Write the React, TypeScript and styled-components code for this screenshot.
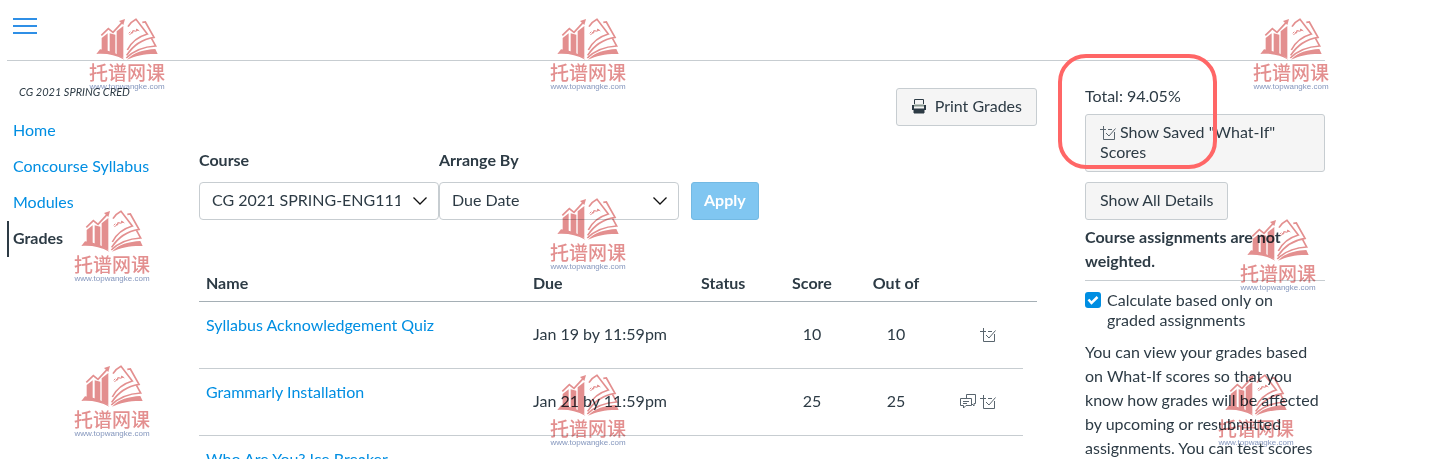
import React from "react";
import styled, { createGlobalStyle, css } from "styled-components";

const ink = "#2d3b45";
const link = "#008ee2";
const line = "#c7cdd1";

const Global = createGlobalStyle`
  *, *::before, *::after { box-sizing: border-box; }
  body { margin: 0; background: #fff; color: ${ink}; font: 16px/24px Lato, "Noto Sans CJK SC", sans-serif; }
  button, select, input { font: inherit; color: inherit; }
  a { color: ${link}; text-decoration: none; }
`;

const Page = styled.div`
  position: relative;
  height: 100vh;
  overflow: hidden;
  padding: 0 109px 0 7px;
`;
const Header = styled.header`
  display: flex;
  padding: 12px 4px 20px;
  border-bottom: 1px solid ${line};
`;
const MenuButton = styled.button`
  display: flex;
  align-items: center;
  height: 28px;
  padding: 0 2px;
  border: 0;
  background: none;
  color: #2f8fe6;
`;
const Columns = styled.div`
  display: flex;
  align-items: flex-start;
`;
const Sidebar = styled.nav`
  flex: 0 0 192px;
  padding-top: 19px;
`;
const Term = styled.p`
  margin: 0 0 9px;
  padding-left: 12px;
  font-size: 11px;
  font-style: italic;
`;
const NavList = styled.ul`
  display: flex;
  flex-direction: column;
  margin: 0;
  padding: 0;
  list-style: none;
`;
const NavLink = styled.a<{ $active?: boolean }>`
  display: block;
  padding: 5px 6px 7px;
  ${(p) => p.$active
    ? css`padding-left: 4px; border-left: 2px solid ${ink}; color: ${ink}; font-weight: bold;`
    : ""}
`;
const Main = styled.main`
  flex: 1;
  min-width: 0;
  padding-top: 27px;
`;
const Button = styled.button`
  padding: 7px 14px 9px;
  border: 1px solid ${line};
  border-radius: 3px;
  background: #f5f5f5;
  line-height: 20px;
  text-align: left;
`;
const PrintButton = styled(Button)`
  display: flex;
  align-items: center;
  gap: 8px;
  margin-left: auto;
`;
const Filters = styled.form`
  display: flex;
  align-items: flex-end;
  margin-top: 22px;
`;
const Field = styled.label`
  display: flex;
  flex-direction: column;
  gap: 10px;
  width: 240px;
  font-weight: bold;
`;
const SelectBox = styled.span`
  display: grid;
  align-items: center;
  font-weight: normal;
  & > * { grid-area: 1 / 1; }
  svg { justify-self: end; margin-right: 11px; pointer-events: none; }
`;
const Select = styled.select`
  width: 100%;
  height: 38px;
  padding: 0 38px 2px 12px;
  border: 1px solid ${line};
  border-radius: 4px;
  background: #fff;
  appearance: none;
`;
const Apply = styled(Button)`
  margin-left: 12px;
  padding: 7px 12px 9px;
  border-color: #73b9e3;
  background: #80c6f1;
  color: #fff;
  font-weight: bold;
`;
const Grades = styled.table`
  width: 100%;
  margin-top: 46px;
  border-collapse: separate;
  border-spacing: 0;
  table-layout: fixed;
  th { height: 36px; padding: 0 7px 2px; border-bottom: 1px solid #a5afb5; text-align: left; }
  td { height: 67px; padding: 0 7px 4px; vertical-align: middle; }
`;
const Row = styled.tr`
  background: linear-gradient(${line}, ${line}) left bottom / calc(100% - 14px) 1px no-repeat;
`;
const NameCell = styled.td`
  && { padding-top: 11px; vertical-align: top; }
`;
const NumHead = styled.th`
  && { padding-left: 0; padding-right: 0; text-align: center; }
`;
const Num = styled.td`
  && { padding-left: 0; padding-right: 0; text-align: center; }
`;
const Icons = styled.span`
  display: flex;
  justify-content: flex-end;
  gap: 3px;
  padding: 2px 34px 0 0;
`;
const Aside = styled.aside`
  flex: 0 0 240px;
  margin-left: 48px;
  padding-top: 23px;
`;
const Total = styled.div`
  margin-bottom: 6px;
`;
const WhatIf = styled(Button)`
  display: block;
  width: 100%;
  margin-bottom: 10px;
  svg { vertical-align: -3px; margin-right: 4px; }
`;
const Weighting = styled.p`
  margin: 5px 0 7px;
  padding-bottom: 7px;
  border-bottom: 1px solid ${line};
  font-weight: bold;
`;
const CheckLabel = styled.label`
  display: flex;
  align-items: flex-start;
  gap: 6px;
  margin-top: 9px;
  line-height: 20px;
`;
const CheckWrap = styled.span`
  display: grid;
  flex: none;
  margin-top: 2px;
  & > * { grid-area: 1 / 1; }
  svg { pointer-events: none; }
`;
const CheckInput = styled.input`
  width: 16px;
  height: 16px;
  margin: 0;
  border-radius: 3px;
  background: #008ee2;
  appearance: none;
`;
const Help = styled.p`
  margin: 10px 0 0;
`;
const Highlight = styled.div`
  position: absolute;
  top: 54px;
  left: 1058px;
  width: 159px;
  height: 115px;
  border: 4px solid #ff6666;
  border-radius: 28px;
  pointer-events: none;
`;
const Mark = styled.div<{ $x: number; $y: number }>`
  position: absolute;
  left: ${(p) => p.$x}px;
  top: ${(p) => p.$y}px;
  display: flex;
  flex-direction: column;
  align-items: center;
  width: 80px;
  color: #e38f8f;
  mix-blend-mode: multiply;
  pointer-events: none;
`;
const MarkName = styled.span`
  font: 500 19px/20px "Noto Sans CJK SC", sans-serif;
`;
const MarkUrl = styled.span`
  color: #8496bd;
  font: 8px/10px "Liberation Sans", sans-serif;
`;

const AssignIcon = () => (
  <svg width="16" height="16" viewBox="0 0 16 16" fill="none" stroke="#59656e" aria-hidden="true">
    <path d="M0 4.500h6M3.500 1v13.500h11V7M8 4.500h4M6 8l3 3 6.500-7.500" />
  </svg>
);
const CommentIcon = () => (
  <svg width="17" height="16" viewBox="0 0 17 16" fill="none" stroke="#59656e" aria-hidden="true">
    <path d="M6.500 4V.500h9v9H14V12l-2.500-2.500M.500 4.500h11v7H6L3.500 14v-2.500h-3zM3 7.500h6M3 9.500h4" />
  </svg>
);
const PrintIcon = () => (
  <svg width="16" height="16" viewBox="0 0 16 16" fill="none" stroke="currentColor" aria-hidden="true">
    <path d="M3.500 6V1.500h9V6" />
    <path d="M3 7.500h10" stroke="#87968f" strokeWidth="2" />
    <path d="M2 12V7M14 12V7" strokeWidth="2" />
    <path d="M3 11h10v4H3z" fill="currentColor" />
  </svg>
);
const Chevron = () => (
  <svg width="16" height="10" viewBox="0 0 16 10" fill="none" stroke="#111" strokeWidth="1.300" aria-hidden="true">
    <path d="M1.500 1.500 8 8l6.500-6.500" />
  </svg>
);
const Book = () => (
  <svg width="64" height="44" viewBox="0 0 192 132" fill="currentColor" aria-hidden="true">
    <path d="M20 60l18-14v55l-18-3zM44 46l17 4v58l-17-6zM65 40l20-16v97l-20-11z" />
    <path d="M4 108l11-14c28 4 56 12 73 31-26-14-52-19-84-17zM188 108l-7-15c-34 2-66 10-85 32 26-12 54-18 92-17z" />
    <g fill="none" stroke="currentColor" strokeWidth="5">
      <path d="M19 52l21-20 14 11 27-29M99 26c6-10 14-17 24-22l34 44c-34 10-50 28-60 48M142 13l9-1 26 46c-38 6-64 26-82 54M170 62l12 22c-36 2-66 14-88 36" />
      <path d="M101 46l5-5M103 50l7-4-1-4M112 46l1-8 6 0-4 5M122 42l3-9 8 6M123 38l7-1" strokeWidth="3" />
    </g>
    <path d="M90 3l-5 18-13-12z" />
  </svg>
);

const marks = [
  [87, 18], [548, 18], [1251, 18], [72, 210], [548, 198], [1238, 219], [72, 365], [548, 374], [1216, 374],
];
const rows = [
  { name: "Syllabus Acknowledgement Quiz", due: "Jan 19 by 11:59pm", score: "10", outOf: "10", comments: false },
  { name: "Grammarly Installation", due: "Jan 21 by 11:59pm", score: "25", outOf: "25", comments: true },
  { name: "Who Are You? Ice Breaker", due: "", score: "", outOf: "", comments: false },
];

export default function App() {
  return (
    <Page>
      <Global />
      <Header>
        <MenuButton aria-label="Course navigation">
          <svg width="24" height="18" viewBox="0 0 24 18" fill="none" stroke="currentColor" strokeWidth="2" aria-hidden="true">
            <path d="M0 2h24M0 9h24M0 16h24" />
          </svg>
        </MenuButton>
      </Header>
      <Columns>
        <Sidebar>
          <Term>CG 2021 SPRING CRED</Term>
          <NavList>
            {["Home", "Concourse Syllabus", "Modules", "Grades"].map((t) => (
              <li key={t}><NavLink href="#" $active={t === "Grades"}>{t}</NavLink></li>
            ))}
          </NavList>
        </Sidebar>
        <Main>
          <PrintButton><PrintIcon />Print Grades</PrintButton>
          <Filters>
            <Field>
              Course
              <SelectBox><Select><option>CG 2021 SPRING-ENG111</option></Select><Chevron /></SelectBox>
            </Field>
            <Field>
              Arrange By
              <SelectBox><Select><option>Due Date</option></Select><Chevron /></SelectBox>
            </Field>
            <Apply type="button">Apply</Apply>
          </Filters>
          <Grades>
            <colgroup>
              <col /><col width="168" /><col width="76" /><col width="84" /><col width="84" /><col width="99" />
            </colgroup>
            <thead>
              <tr>
                <th>Name</th><th>Due</th><th>Status</th><NumHead>Score</NumHead><NumHead>Out of</NumHead><th aria-label="Details" />
              </tr>
            </thead>
            <tbody>
              {rows.map((r) => (
                <Row key={r.name}>
                  <NameCell><a href="#">{r.name}</a></NameCell>
                  <td>{r.due}</td>
                  <td />
                  <Num>{r.score}</Num>
                  <Num>{r.outOf}</Num>
                  <td><Icons>{r.comments && <CommentIcon />}{r.score && <AssignIcon />}</Icons></td>
                </Row>
              ))}
            </tbody>
          </Grades>
        </Main>
        <Aside>
          <Total>Total: 94.05%</Total>
          <WhatIf><AssignIcon />Show Saved "What-If" Scores</WhatIf>
          <Button>Show All Details</Button>
          <Weighting>Course assignments are not weighted.</Weighting>
          <CheckLabel>
            <CheckWrap>
              <CheckInput type="checkbox" defaultChecked />
              <svg width="16" height="16" viewBox="0 0 16 16" fill="none" stroke="#fff" strokeWidth="2.500" aria-hidden="true">
                <path d="M3.500 7.500l3 3.500 6-6" />
              </svg>
            </CheckWrap>
            Calculate based only on graded assignments
          </CheckLabel>
          <Help>
            You can view your grades based on What-If scores so that you know how grades will be affected by
            upcoming or resubmitted assignments. You can test scores
          </Help>
        </Aside>
      </Columns>
      <Highlight />
      {marks.map(([x, y]) => (
        <Mark key={`${x}-${y}`} $x={x} $y={y}>
          <Book />
          <MarkName>托谱网课</MarkName>
          <MarkUrl>www.topwangke.com</MarkUrl>
        </Mark>
      ))}
    </Page>
  );
}
